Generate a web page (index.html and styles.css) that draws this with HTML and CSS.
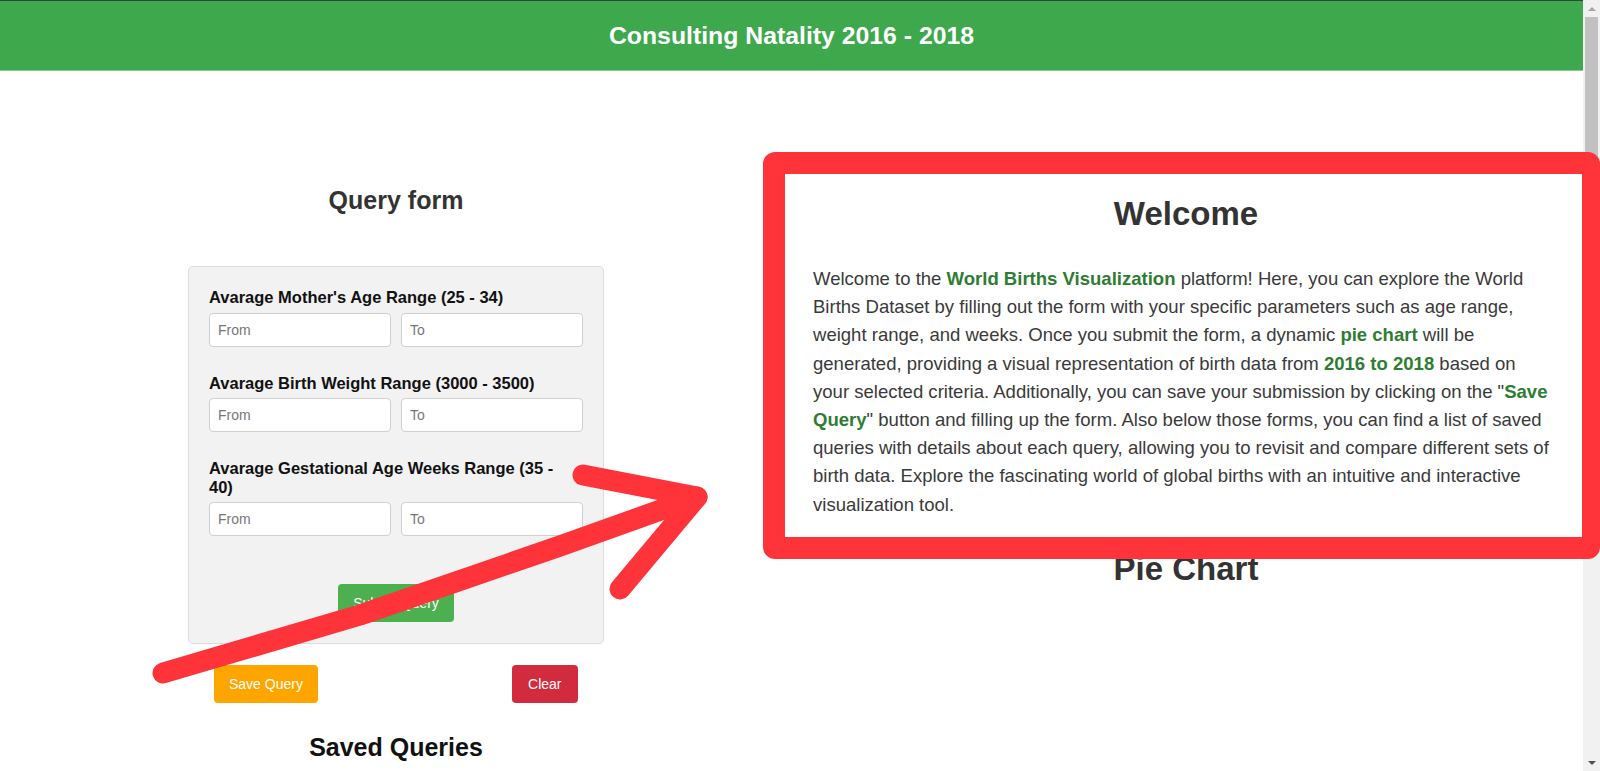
FILE: index.html
```html
<!DOCTYPE html>
<html lang="en">
<head>
<meta charset="utf-8">
<title>Consulting Natality 2016 - 2018</title>
<link rel="stylesheet" href="styles.css">
</head>
<body>
<div class="page">
  <div class="main">
    <header class="topbar">
      <h1 class="topbar-title">Consulting Natality 2016 - 2018</h1>
    </header>
    <div class="content">
      <section class="left-col">
        <h2 class="section-title">Query form</h2>
        <form class="query-form">
          <div class="field">
            <label class="field-label">Avarage Mother's Age Range (25 - 34)</label>
            <div class="field-inputs">
              <input class="text-input" type="text" placeholder="From">
              <input class="text-input" type="text" placeholder="To">
            </div>
          </div>
          <div class="field">
            <label class="field-label">Avarage Birth Weight Range (3000 - 3500)</label>
            <div class="field-inputs">
              <input class="text-input" type="text" placeholder="From">
              <input class="text-input" type="text" placeholder="To">
            </div>
          </div>
          <div class="field">
            <label class="field-label">Avarage Gestational Age Weeks Range (35 - 40)</label>
            <div class="field-inputs">
              <input class="text-input" type="text" placeholder="From">
              <input class="text-input" type="text" placeholder="To">
            </div>
          </div>
          <div class="submit-row">
            <button class="btn btn-green" type="button">Submit Query</button>
          </div>
        </form>
        <div class="actions">
          <button class="btn btn-orange" type="button">Save Query</button>
          <button class="btn btn-red" type="button">Clear</button>
        </div>
        <h2 class="section-title saved-title">Saved Queries</h2>
      </section>
      <section class="right-col">
        <div class="welcome-card">
          <h1 class="welcome-title">Welcome</h1>
          <p class="welcome-text">Welcome to the <strong>World Births Visualization</strong> platform! Here, you can explore the World Births Dataset by filling out the form with your specific parameters such as age range, weight range, and weeks. Once you submit the form, a dynamic <strong>pie chart</strong> will be generated, providing a visual representation of birth data from <strong>2016 to 2018</strong> based on your selected criteria. Additionally, you can save your submission by clicking on the "<strong>Save Query</strong>" button and filling up the form. Also below those forms, you can find a list of saved queries with details about each query, allowing you to revisit and compare different sets of birth data. Explore the fascinating world of global births with an intuitive and interactive visualization tool.</p>
        </div>
        <h2 class="pie-title">Pie Chart</h2>
      </section>
    </div>
  </div>
  <div class="scrollbar">
    <div class="scroll-btn"><span class="tri-up"></span></div>
    <div class="scroll-track"><div class="scroll-thumb"></div></div>
    <div class="scroll-btn"><span class="tri-down"></span></div>
  </div>
</div>

<div class="annot-box"></div>
<svg class="annot-arrow" width="1600" height="771" viewBox="0 0 1600 771" xmlns="http://www.w3.org/2000/svg">
  <polyline points="163,673 360,615 560,546 697,497" fill="none" stroke="#ff333a" stroke-width="21" stroke-linecap="round" stroke-linejoin="round"/>
  <polyline points="583,475 697,497 620,589" fill="none" stroke="#ff333a" stroke-width="21" stroke-linecap="round" stroke-linejoin="round"/>
</svg>
</body>
</html>
```

FILE: styles.css
```css
html, body {
  margin: 0;
  padding: 0;
  height: 100%;
  overflow: hidden;
  background: #ffffff;
}

body {
  font-family: "Liberation Sans", Arial, sans-serif;
  color: #333;
}

.page {
  display: flex;
  width: 1600px;
  height: 771px;
}

.main {
  flex: 1;
  min-width: 0;
}

/* Header */
.topbar {
  height: 69px;
  background: #3ea84d;
  border-top: 1px solid #34443b;
  border-bottom: 1px solid #86cc90;
  display: flex;
  align-items: center;
  justify-content: center;
}

.topbar-title {
  margin: 0;
  color: #ffffff;
  font-size: 24.8px;
  font-weight: bold;
  line-height: 30px;
}

/* Layout */
.content {
  display: grid;
  grid-template-columns: 792px 1fr;
}

.left-col {
  display: flex;
  flex-direction: column;
  align-items: center;
  padding-top: 115px;
}

.section-title {
  margin: 0;
  font-size: 25px;
  line-height: 29px;
  font-weight: bold;
  color: #333;
}

/* Query form */
.query-form {
  box-sizing: border-box;
  width: 416px;
  margin-top: 51px;
  padding: 21px 20px 21px;
  background: #f2f2f2;
  border: 1px solid #dcdcdc;
  border-radius: 5px;
}

.field {
  margin-bottom: 27px;
}

.field-label {
  display: block;
  margin-bottom: 6px;
  padding-right: 12px;
  font-size: 16.5px;
  line-height: 18.5px;
  font-weight: bold;
  color: #111;
}

.field-inputs {
  display: flex;
  gap: 10px;
}

.text-input {
  box-sizing: border-box;
  flex: 1;
  min-width: 0;
  height: 34px;
  padding: 0 8px;
  border: 1px solid #cfcfcf;
  border-radius: 4px;
  background: #fff;
  font-family: "Liberation Sans", Arial, sans-serif;
  font-size: 14px;
  color: #333;
}

.text-input::placeholder {
  color: #777;
}

.submit-row {
  display: flex;
  justify-content: center;
  padding-top: 21px;
}

.btn {
  height: 38px;
  padding: 0 15px;
  border: none;
  border-radius: 4px;
  color: #fff;
  font-family: "Liberation Sans", Arial, sans-serif;
  font-size: 14px;
  line-height: 38px;
}

.btn-green { background: #4caf50; }
.btn-orange { background: #ffa500; }
.btn-red {
  background: #d22b3e;
  padding: 0 16.5px;
}

.actions {
  box-sizing: border-box;
  width: 416px;
  margin-top: 21px;
  padding: 0 26px;
  display: flex;
  justify-content: space-between;
}

.saved-title {
  margin-top: 30px;
  color: #111;
}

/* Right column */
.right-col {
  display: flex;
  flex-direction: column;
  align-items: center;
  padding-top: 103px;
  padding-right: 3px;
}

.welcome-card {
  box-sizing: border-box;
  width: 100%;
  padding: 21px 24px 19px 21px;
  background: #fff;
}

.welcome-title {
  margin: 0;
  padding-left: 3px;
  text-align: center;
  font-size: 33px;
  line-height: 38px;
  font-weight: bold;
  color: #333;
}

.welcome-text {
  margin: 32px 0 0;
  font-size: 18.55px;
  line-height: 28.2px;
  color: #3a3a3a;
}

.welcome-text strong {
  color: #2e7d32;
}

.pie-title {
  margin: 12px 0 0;
  font-size: 33px;
  line-height: 38px;
  font-weight: bold;
  color: #333;
}

/* Scrollbar */
.scrollbar {
  width: 17px;
  height: 771px;
  background: #f1f1f1;
  display: flex;
  flex-direction: column;
}

.scroll-btn {
  height: 17px;
  display: flex;
  align-items: center;
  justify-content: center;
}

.tri-up {
  width: 0;
  height: 0;
  border-left: 4px solid transparent;
  border-right: 4px solid transparent;
  border-bottom: 4px solid #a3a3a3;
}

.tri-down {
  width: 0;
  height: 0;
  border-left: 4px solid transparent;
  border-right: 4px solid transparent;
  border-top: 4px solid #505050;
}

.scroll-track {
  flex: 1;
}

.scroll-thumb {
  margin: 0 2px;
  height: 360px;
  background: #c1c1c1;
}

/* Annotation overlay (drawn over the screenshot) */
.annot-box {
  position: absolute;
  left: 763px;
  top: 152px;
  box-sizing: border-box;
  width: 837px;
  height: 407px;
  border: 22px solid #ff333a;
  border-right-width: 18px;
  border-radius: 12px;
  pointer-events: none;
}

.annot-arrow {
  position: absolute;
  left: 0;
  top: 0;
  pointer-events: none;
}
```
